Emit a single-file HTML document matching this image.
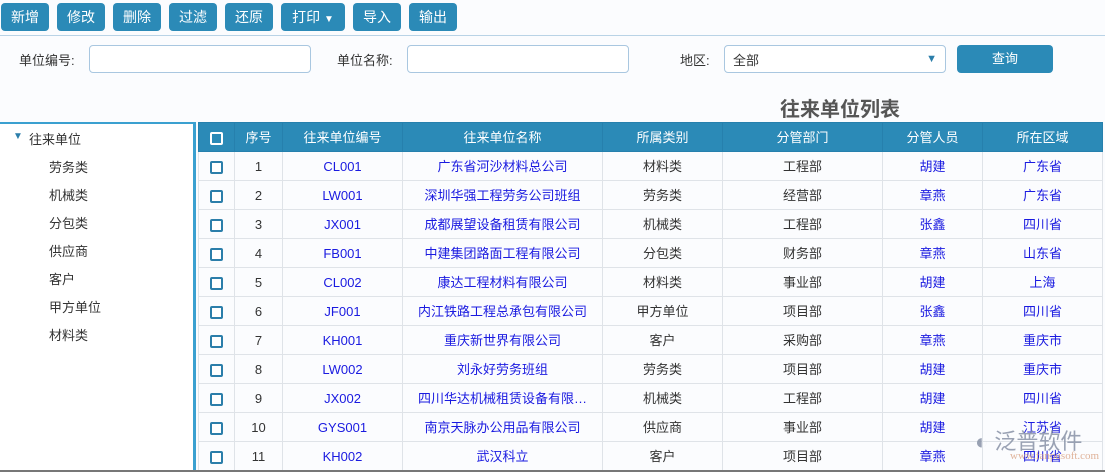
<!DOCTYPE html>
<html><head><meta charset="utf-8"><style>
*{margin:0;padding:0;box-sizing:border-box}
body{width:1105px;height:472px;overflow:hidden;background:#fbfcfe;font-family:"Liberation Sans","Noto Sans CJK SC",sans-serif;font-size:13px;color:#333;position:relative}
.btn{position:absolute;top:3px;height:28px;background:#2b8ab7;color:#fff;border-radius:4px;font-size:14px;line-height:28px;text-align:center}
.lbl{position:absolute;top:50px;font-size:13px;color:#333}
.inp{position:absolute;top:45px;height:28px;border:1px solid #a9c7e0;border-radius:4px;background:#fff}
table{position:absolute;left:198px;top:122px;border-collapse:collapse;table-layout:fixed;width:904px}
td,th{height:29px;text-align:center;border:1px solid #dfe3e8;font-weight:normal;white-space:nowrap;overflow:hidden;line-height:27px}
th{background:#2b8ab7;color:#fff;border-color:#2680ad;font-size:13px}
td{font-size:13px;color:#333}
.b{color:#1a1ae0}
.cb{display:inline-block;width:13px;height:13px;border:2px solid #2b7eaa;border-radius:2px;vertical-align:middle;background:#fff}
th .cb{border-color:#fff;background:transparent}
.tree{position:absolute;left:0;top:122px;width:196px;height:350px;background:#fff;border-top:2px solid #3aa0d0;border-right:3px solid #3aa0d0}
.tree div{position:absolute;font-size:13px;color:#333}
</style></head><body>
<div class="btn" style="left:1px;width:48px">新增</div>
<div class="btn" style="left:57px;width:48px">修改</div>
<div class="btn" style="left:113px;width:48px">删除</div>
<div class="btn" style="left:169px;width:48px">过滤</div>
<div class="btn" style="left:225px;width:48px">还原</div>
<div class="btn" style="left:281px;width:64px">打印 <span style="font-size:10px">▼</span></div>
<div class="btn" style="left:353px;width:48px">导入</div>
<div class="btn" style="left:409px;width:48px">输出</div>
<div style="position:absolute;left:0;top:35px;width:1105px;height:1px;background:#b9d3e6"></div>
<div class="lbl" style="left:19px">单位编号:</div>
<div class="inp" style="left:89px;width:222px"></div>
<div class="lbl" style="left:337px">单位名称:</div>
<div class="inp" style="left:407px;width:222px"></div>
<div class="lbl" style="left:680px">地区:</div>
<div class="inp" style="left:724px;width:222px"><span style="position:absolute;left:8px;top:4px">全部</span><span style="position:absolute;right:8px;top:7px;font-size:11px;color:#2b7eaa">▼</span></div>
<div class="btn" style="left:957px;top:45px;width:96px;height:28px;font-size:13px">查询</div>
<div style="position:absolute;left:780px;top:93px;font-size:20px;font-weight:bold;color:#555">往来单位列表</div>
<div class="tree">
<div style="left:13px;top:7px;font-size:10px;color:#2b7eaa">▼</div>
<div style="left:29px;top:5px">往来单位</div>
<div style="left:49px;top:33px">劳务类</div>
<div style="left:49px;top:61px">机械类</div>
<div style="left:49px;top:89px">分包类</div>
<div style="left:49px;top:117px">供应商</div>
<div style="left:49px;top:145px">客户</div>
<div style="left:49px;top:173px">甲方单位</div>
<div style="left:49px;top:201px">材料类</div>
</div>
<table>
<colgroup><col style="width:36px"><col style="width:48px"><col style="width:120px"><col style="width:200px"><col style="width:120px"><col style="width:160px"><col style="width:100px"><col style="width:120px"></colgroup>
<tr><th><span class="cb"></span></th><th>序号</th><th>往来单位编号</th><th>往来单位名称</th><th>所属类别</th><th>分管部门</th><th>分管人员</th><th>所在区域</th></tr>
<tr><td><span class="cb"></span></td><td>1</td><td class="b">CL001</td><td class="b">广东省河沙材料总公司</td><td>材料类</td><td>工程部</td><td class="b">胡建</td><td class="b">广东省</td></tr>
<tr><td><span class="cb"></span></td><td>2</td><td class="b">LW001</td><td class="b">深圳华强工程劳务公司班组</td><td>劳务类</td><td>经营部</td><td class="b">章燕</td><td class="b">广东省</td></tr>
<tr><td><span class="cb"></span></td><td>3</td><td class="b">JX001</td><td class="b">成都展望设备租赁有限公司</td><td>机械类</td><td>工程部</td><td class="b">张鑫</td><td class="b">四川省</td></tr>
<tr><td><span class="cb"></span></td><td>4</td><td class="b">FB001</td><td class="b">中建集团路面工程有限公司</td><td>分包类</td><td>财务部</td><td class="b">章燕</td><td class="b">山东省</td></tr>
<tr><td><span class="cb"></span></td><td>5</td><td class="b">CL002</td><td class="b">康达工程材料有限公司</td><td>材料类</td><td>事业部</td><td class="b">胡建</td><td class="b">上海</td></tr>
<tr><td><span class="cb"></span></td><td>6</td><td class="b">JF001</td><td class="b">内江铁路工程总承包有限公司</td><td>甲方单位</td><td>项目部</td><td class="b">张鑫</td><td class="b">四川省</td></tr>
<tr><td><span class="cb"></span></td><td>7</td><td class="b">KH001</td><td class="b">重庆新世界有限公司</td><td>客户</td><td>采购部</td><td class="b">章燕</td><td class="b">重庆市</td></tr>
<tr><td><span class="cb"></span></td><td>8</td><td class="b">LW002</td><td class="b">刘永好劳务班组</td><td>劳务类</td><td>项目部</td><td class="b">胡建</td><td class="b">重庆市</td></tr>
<tr><td><span class="cb"></span></td><td>9</td><td class="b">JX002</td><td class="b">四川华达机械租赁设备有限…</td><td>机械类</td><td>工程部</td><td class="b">胡建</td><td class="b">四川省</td></tr>
<tr><td><span class="cb"></span></td><td>10</td><td class="b">GYS001</td><td class="b">南京天脉办公用品有限公司</td><td>供应商</td><td>事业部</td><td class="b">胡建</td><td class="b">江苏省</td></tr>
<tr><td><span class="cb"></span></td><td>11</td><td class="b">KH002</td><td class="b">武汉科立</td><td>客户</td><td>项目部</td><td class="b">章燕</td><td class="b">四川省</td></tr>
</table>
<div style="position:absolute;left:0;top:470px;width:1105px;height:2px;background:#777"></div>
<div style="position:absolute;left:975px;top:424px;font-size:22px;color:#8892a6;opacity:.85">◐ 泛普软件</div>
<div style="position:absolute;left:1010px;top:450px;font-size:11px;color:#d9a080;opacity:.8;font-family:'Liberation Serif',serif">www.fanpusoft.com</div>
</body></html>
